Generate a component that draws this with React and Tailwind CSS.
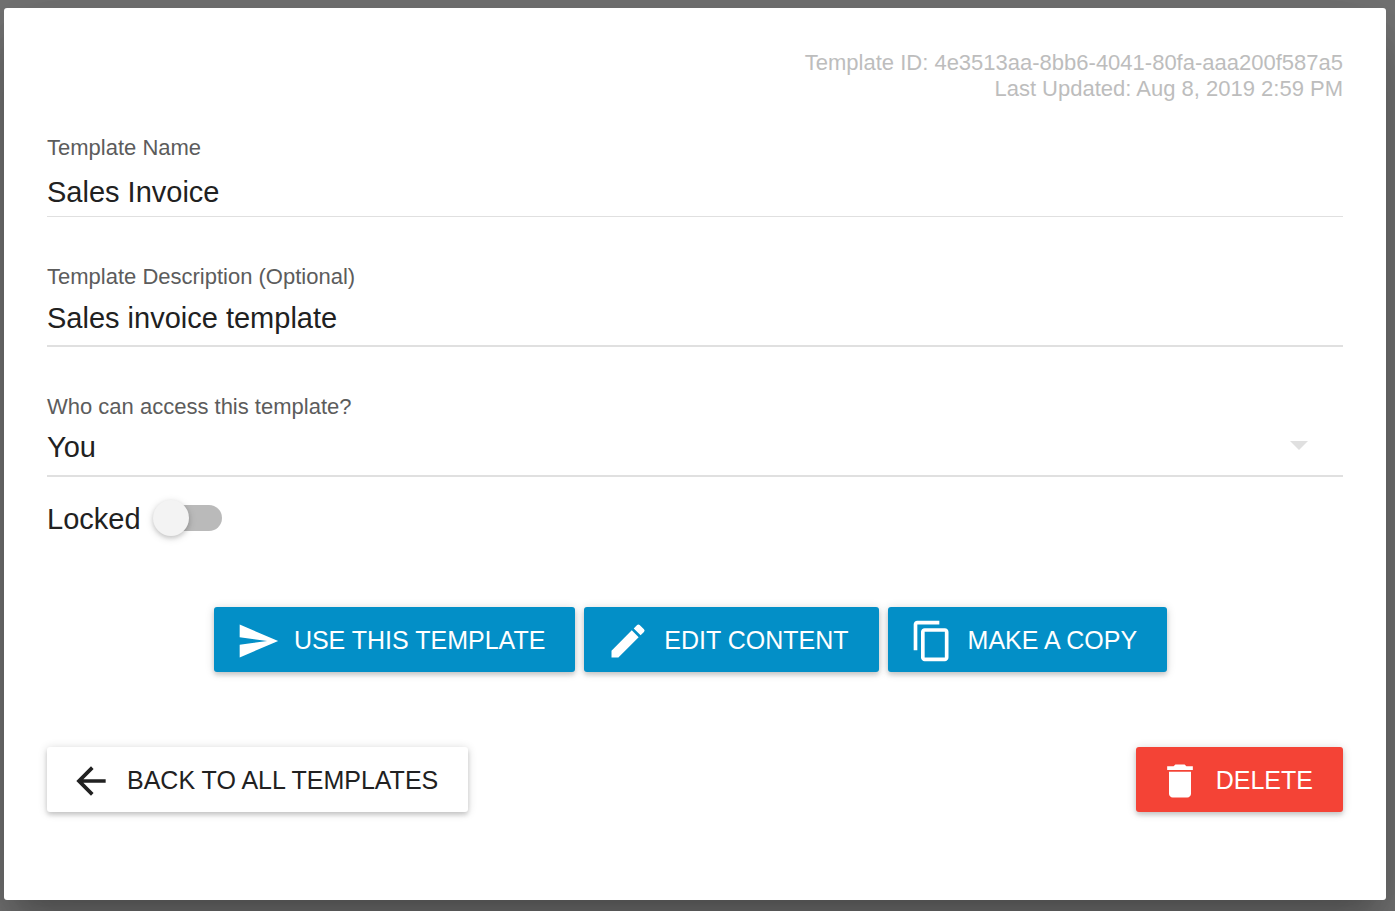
import { useState } from "react";
import { MdArrowBack, MdContentCopy, MdDelete, MdSend } from "react-icons/md";

const SHADOW = "shadow-[0_3px_4px_rgba(0,0,0,0.14),0_1px_10px_rgba(0,0,0,0.16)]";

const TONES = {
  primary: "bg-[#038fc7] text-white",
  plain: "bg-white text-[#212121]",
  danger: "bg-[#f44336] text-white",
};

function PencilIcon(props) {
  return (
    <svg viewBox="0 0 24 24" fill="currentColor" {...props}>
      <path d="M3 17.25V21h3.75L17.81 9.94l-3.75-3.75L3 17.25zM20.71 7.04a1 1 0 0 0 0-1.41l-2.34-2.34a1 1 0 0 0-1.41 0l-1.83 1.83 3.75 3.75 1.83-1.83z" />
    </svg>
  );
}

function ActionButton({ icon: Icon, tone, children }) {
  return (
    <button
      type="button"
      className={`flex h-[65px] cursor-pointer items-center gap-[14px] rounded-[3px] pr-[30px] pl-[22px] text-[25px] leading-8 whitespace-nowrap uppercase ${SHADOW} ${TONES[tone]}`}
    >
      <Icon className="mt-[3px] size-11 shrink-0" aria-hidden="true" />
      {children}
    </button>
  );
}

function Field({ id, label, children }) {
  return (
    <div className="flex flex-col">
      <label htmlFor={id} className="text-[22px] leading-[26px] text-[#5c5c5c]">
        {label}
      </label>
      {children}
    </div>
  );
}

export default function App() {
  const [name, setName] = useState("Sales Invoice");
  const [description, setDescription] = useState("Sales invoice template");
  const [access, setAccess] = useState("You");
  const [locked, setLocked] = useState(false);

  return (
    <div className="flex min-h-screen overflow-hidden bg-[#747474] pt-2 pr-[9px] pb-[11px] pl-1 font-['Liberation_Sans',Arial,sans-serif] text-[#212121]">
      <main className="flex grow flex-col rounded-[3px] bg-white px-[43px] pt-[42px] pb-[88px] shadow-[0_43px_68px_5px_rgba(0,0,0,0.14),0_16px_83px_14px_rgba(0,0,0,0.12),0_20px_27px_-13px_rgba(0,0,0,0.2)]">
        <div className="text-right text-[22px] leading-[26px] text-[#bdbdbd]">
          <p>Template ID: 4e3513aa-8bb6-4041-80fa-aaa200f587a5</p>
          <p>Last Updated: Aug 8, 2019 2:59 PM</p>
        </div>

        <form className="mt-[33px] flex flex-col gap-[47px]">
          <Field id="template-name" label="Template Name">
            <input
              id="template-name"
              type="text"
              value={name}
              onChange={(e) => setName(e.target.value)}
              className="h-14 border-b border-[#e0e0e0] pt-[7px] text-[29px] outline-none"
            />
          </Field>

          <Field id="template-description" label="Template Description (Optional)">
            <input
              id="template-description"
              type="text"
              value={description}
              onChange={(e) => setDescription(e.target.value)}
              className="h-[57px] border-b-2 border-[#e0e0e0] pt-px text-[29px] outline-none"
            />
          </Field>

          <Field id="template-access" label="Who can access this template?">
            <div className="relative">
              <select
                id="template-access"
                value={access}
                onChange={(e) => setAccess(e.target.value)}
                className="h-[57px] w-full appearance-none border-b-2 border-[#e0e0e0] pt-px text-[29px] outline-none"
              >
                <option>You</option>
              </select>
              <svg
                viewBox="0 0 18 9"
                className="pointer-events-none absolute top-[21px] right-[35px] h-[9px] w-[18px] fill-[#e0e0e0]"
                aria-hidden="true"
              >
                <path d="M0 0h18L9 9z" />
              </svg>
            </div>
          </Field>
        </form>

        <div className="mt-[23px] flex h-9 items-center gap-4">
          <label htmlFor="template-locked" className="pt-0.5 text-[29px] leading-9">
            Locked
          </label>
          <input
            id="template-locked"
            type="checkbox"
            role="switch"
            checked={locked}
            onChange={(e) => setLocked(e.target.checked)}
            className="flex h-[26px] w-[65px] cursor-pointer appearance-none items-center rounded-full bg-[#bababa] before:-ml-1 before:size-9 before:shrink-0 before:rounded-full before:bg-[#f3f3f3] before:shadow-[0_2px_4px_rgba(0,0,0,0.14),0_2px_9px_rgba(0,0,0,0.14)] checked:bg-[#81c7e3] checked:before:ml-8 checked:before:bg-[#038fc7]"
          />
        </div>

        <div className="mt-[71px] flex flex-wrap justify-center gap-[9px] pr-[9px]">
          <ActionButton icon={MdSend} tone="primary">Use this template</ActionButton>
          <ActionButton icon={PencilIcon} tone="primary">Edit content</ActionButton>
          <ActionButton icon={MdContentCopy} tone="primary">Make a copy</ActionButton>
        </div>

        <div className="mt-[75px] flex flex-wrap justify-between gap-4">
          <ActionButton icon={MdArrowBack} tone="plain">Back to all templates</ActionButton>
          <ActionButton icon={MdDelete} tone="danger">Delete</ActionButton>
        </div>
      </main>
    </div>
  );
}
